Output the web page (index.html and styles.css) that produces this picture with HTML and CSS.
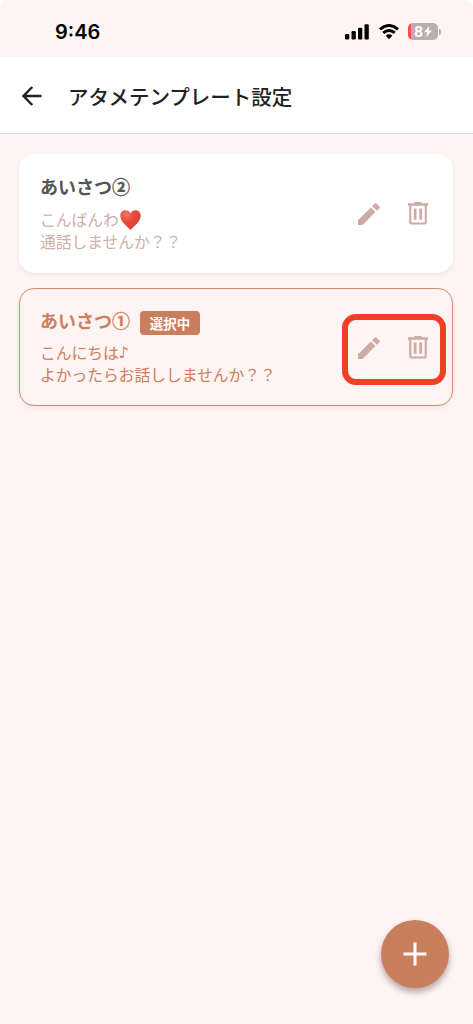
FILE: index.html
```html
<!DOCTYPE html>
<html lang="ja">
<head>
<meta charset="utf-8">
<title>アタメテンプレート設定</title>
<link rel="stylesheet" href="styles.css">
</head>
<body>
<svg class="defs" width="0" height="0" aria-hidden="true">
  <symbol id="pencil" viewBox="0 0 22 22">
    <path d="M0 17.3 12.9 4.5 17.4 9 4.6 22H0zM14.2 3.2 16.8.6Q17.6-.2 18.4.6L21.4 3.6Q22.2 4.4 21.4 5.2L18.8 7.8z"/>
  </symbol>
  <symbol id="trash" viewBox="0 0 20 23">
    <path fill-rule="evenodd" d="M6.300 0h7.400v1.300H20v2.400h-1.200v16.800q0 2-2 2H3.200q-2 0-2-2V3.700H0V1.300h6.300zM3.300 3.700v16.700h13.400V3.700zM5.800 6.500h2.700v11.300H5.800zM11.300 6.500h2.700v11.300h-2.700z"/>
  </symbol>
</svg>
<div class="screen">
  <div class="status">
    <span class="time">9:46</span>
    <div class="indicators">
      <svg width="24" height="16" viewBox="0 0 24 16"><rect y="10" width="4.300" height="5.500" rx="1.200"/><rect x="6.500" y="7" width="4.300" height="8.500" rx="1.200"/><rect x="13" y="3.700" width="4.300" height="11.800" rx="1.200"/><rect x="19.500" y="0.300" width="4.300" height="15.200" rx="1.200"/></svg>
      <svg class="wifi" width="20" height="16" viewBox="0 0 20 16"><g fill="none" stroke="#000" stroke-width="2.900"><path d="M1 5.300Q10-2.400 19 5.300"/><path d="M4.200 8.900Q10 4 15.800 8.900"/></g><path d="M6.600 11.600Q10 8.800 13.400 11.600L10 15.200z"/></svg>
      <div class="battery"><span>8</span><svg width="8" height="11" viewBox="0 0 8 11"><path fill="#fff" d="M5.300 0 0 6.200h3.200L2.300 11 8 4.600H4.700z"/></svg></div>
      <i class="battery-tip"></i>
    </div>
  </div>
  <header class="header">
    <svg width="20" height="20" viewBox="0 0 20 20"><path d="M10.300 1 1.500 10l8.800 9M1.500 10H19.500" fill="none" stroke="#222" stroke-width="2.400"/></svg>
    <h1>アタメテンプレート設定</h1>
  </header>
  <main class="list">
    <section class="card">
      <div class="body">
        <div class="title-row"><h2>あいさつ<span class="num">②</span></h2></div>
        <p>こんばんわ<svg class="heart" width="21" height="20" viewBox="0 0 21 20"><defs><radialGradient id="red" cx=".3" cy=".2" r=".85"><stop offset="0" stop-color="#f47765"/><stop offset=".4" stop-color="#ea4d3f"/><stop offset="1" stop-color="#d63a30"/></radialGradient></defs><path fill="url(#red)" d="M10.500 20C8 16.800.3 12 .3 5.800.3 2.400 2.700.3 5.500.3c2.300 0 4 1.200 5 3.200 1-2 2.700-3.200 5-3.200 2.800 0 5.200 2.100 5.200 5.500C20.700 12 13 16.800 10.500 20z"/></svg></p>
        <p>通話しませんか？？</p>
      </div>
      <div class="actions">
        <svg width="22" height="22"><use href="#pencil"/></svg>
        <svg width="20" height="23"><use href="#trash"/></svg>
      </div>
    </section>
    <section class="card selected">
      <div class="body">
        <div class="title-row"><h2>あいさつ<span class="num">①</span></h2><span class="badge">選択中</span></div>
        <p>こんにちは<span class="note">♪</span></p>
        <p>よかったらお話ししませんか？？</p>
      </div>
      <div class="actions">
        <svg width="22" height="22"><use href="#pencil"/></svg>
        <svg width="20" height="23"><use href="#trash"/></svg>
      </div>
      <div class="highlight"></div>
    </section>
  </main>
  <div class="fab"><svg width="24" height="24" viewBox="0 0 24 24"><path d="M12 .5v23M.5 12h23" stroke="#fff" stroke-width="3"/></svg></div>
</div>
</body>
</html>
```
FILE: styles.css
```css
* { box-sizing: border-box; }
body { margin: 0; background: #fff; font-family: "Noto Sans CJK JP", sans-serif; }
h1, h2, p { margin: 0; }
svg { display: block; flex: none; }
.defs { position: absolute; }
.screen { position: relative; width: 473px; height: 1024px; background: #fdf4f3; border-radius: 8px 8px 0 0; overflow: hidden; }
.status { display: flex; justify-content: space-between; height: 57px; padding: 19px 32px 0 55px; }
.time { font: 600 20px/26px Inter, sans-serif; color: #000; }
.indicators { display: flex; align-items: center; height: 25px; }
.wifi { margin: 0 9px 0 10px; }
.battery { display: flex; align-items: center; justify-content: center; gap: 1px; width: 30px; height: 17px; border-radius: 5px; background: linear-gradient(90deg, #ff4b49 2.500px, #b7b0ae 2.500px); color: #fff; font: 700 14px/17px Inter, sans-serif; }
.battery-tip { width: 2px; height: 6px; margin-left: 1px; border-radius: 0 2px 2px 0; background: #b7b0ae; }
.header { display: flex; align-items: center; gap: 26px; height: 77px; padding: 1px 0 0 22px; background: #fff; border-bottom: 1.500px solid #dedcdc; }
.header h1 { font-size: 20.500px; line-height: 30px; font-weight: 500; color: #222; }
.list { display: flex; flex-direction: column; gap: 15px; padding: 20px 19px 0; }
.card { position: relative; display: flex; justify-content: space-between; width: 434.400px; height: 119px; padding: 19px 25.400px 0 21px; border-radius: 15px; background: #fff; box-shadow: 0 2px 5px rgba(90, 40, 30, .07); color: #ceb0a8; }
.title-row { display: flex; align-items: center; height: 26px; margin-bottom: 10px; }
h2 { font-size: 18px; line-height: 26px; font-weight: 700; color: #555; }
.num { -webkit-text-stroke: .3px currentColor; }
p { display: flex; height: 22px; font-size: 15.750px; line-height: 22px; white-space: nowrap; }
.heart { margin: 1px 0 0 1px; }
.actions { display: flex; align-items: center; gap: 28px; height: 23px; margin-top: 29px; fill: #ccaba4; }
.selected { height: 118.400px; padding: 18px 24.400px 0 20px; border: 1.500px solid #d08d6f; background: #fdf4f3; color: #cc805f; }
.selected .title-row { margin-bottom: 9px; }
.selected .actions { margin-top: 29px; }
.selected h2 { color: #cc805f; }
.badge { margin: 5px 0 0 10px; width: 60px; height: 24px; border-radius: 4px; background: #c97e5d; color: #fff; font-size: 13.500px; line-height: 24px; font-weight: 700; text-align: center; }
.note { display: block; width: 10px; font-family: "DejaVu Sans", sans-serif; }
.highlight { position: absolute; top: 25px; right: 6px; width: 104px; height: 71px; border: 6px solid #ef4026; border-radius: 14px; }
.fab { position: absolute; left: 381px; top: 920px; display: flex; align-items: center; justify-content: center; width: 68px; height: 68px; border-radius: 50%; background: #c97e5d; box-shadow: 0 4px 6px rgba(50, 20, 20, .35); }
```
